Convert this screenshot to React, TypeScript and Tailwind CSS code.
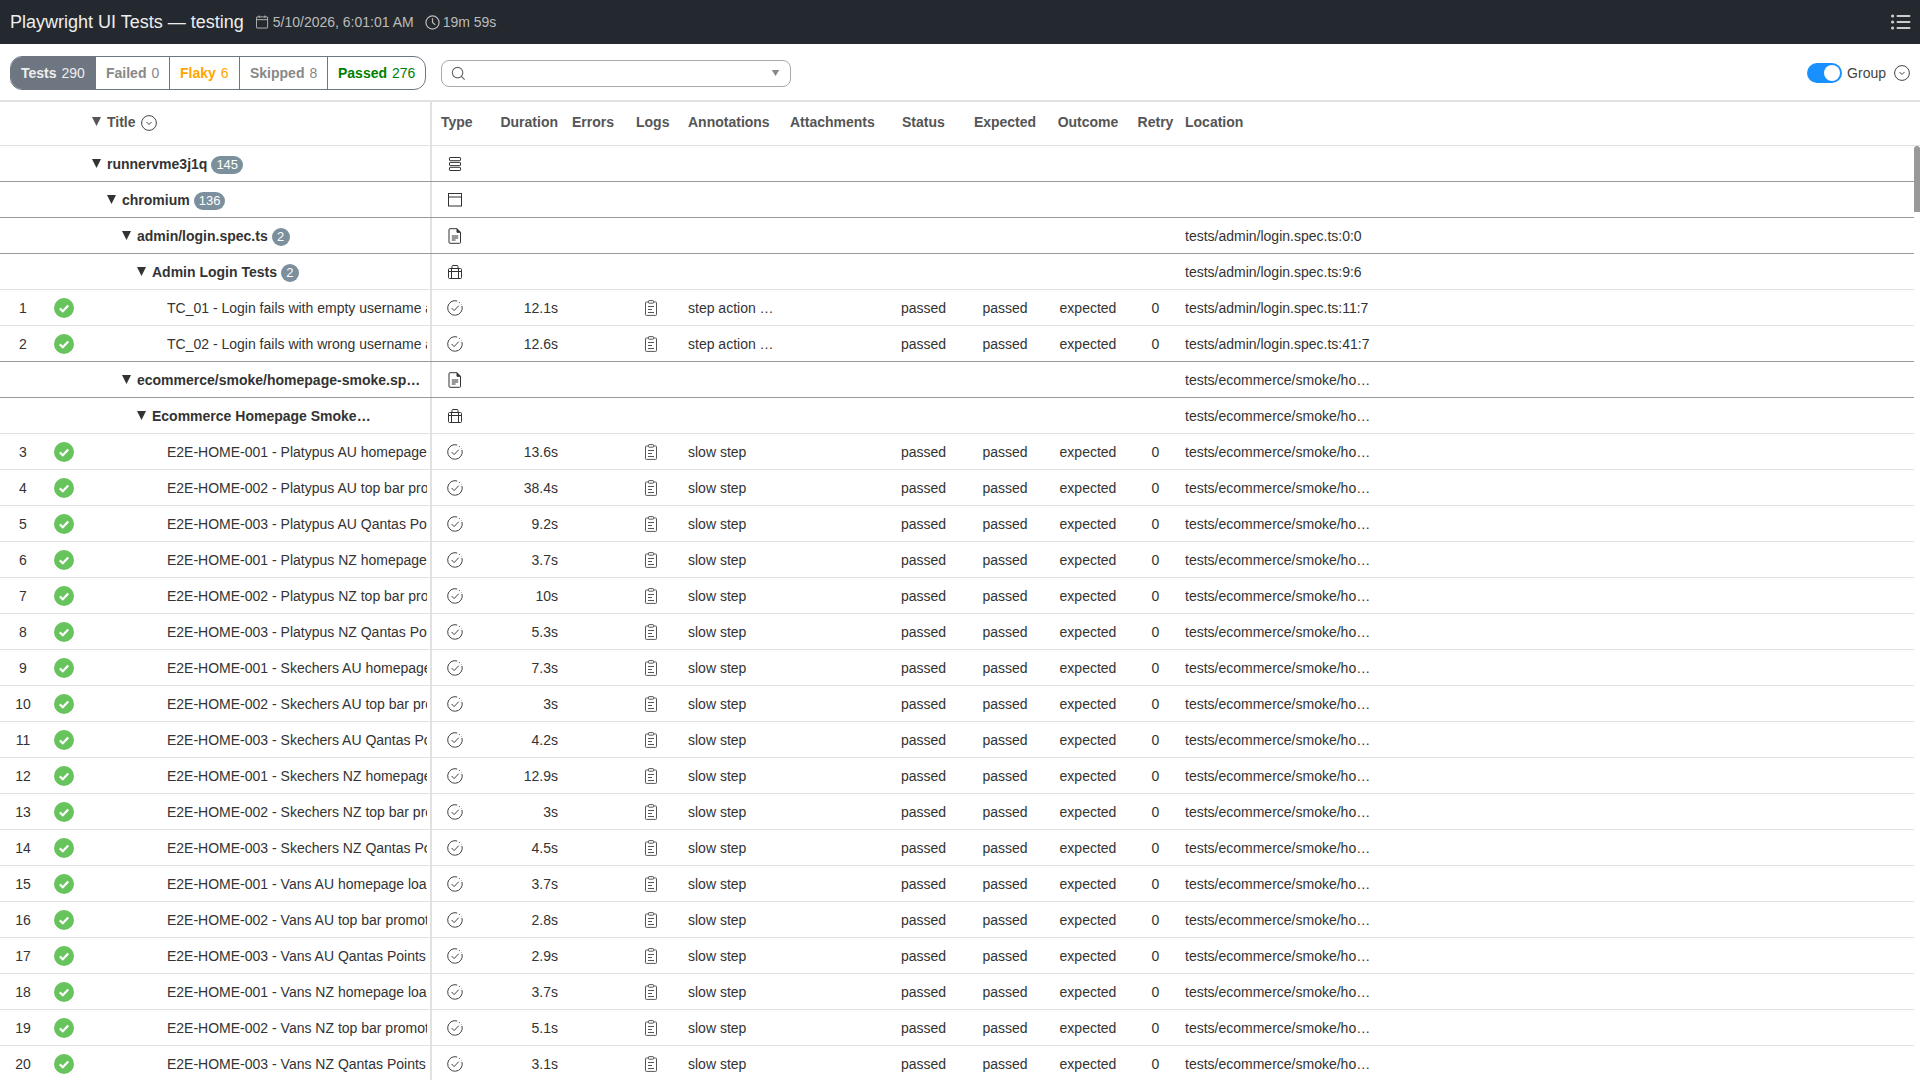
import type { ReactNode } from 'react'

const COLS =
  'grid grid-cols-[58px_76px_62px_52px_102px_112px_74px_74px_92px_43px_1fr] items-center'

// ── Icons ─────────────────────────────────────────────────────────────────
function Svg({ children, className }: { children: ReactNode; className?: string }) {
  return (
    <svg viewBox="0 0 16 16" fill="none" stroke="currentColor" strokeWidth="1" className={className ?? 'h-4 w-4 text-[#333]'}>
      {children}
    </svg>
  )
}

const ServerIcon = () => (
  <Svg>
    <rect x="2.5" y="1.5" width="11" height="3.2" rx="0.6" />
    <rect x="2.5" y="6.4" width="11" height="3.2" rx="0.6" />
    <rect x="2.5" y="11.3" width="11" height="3.2" rx="0.6" />
  </Svg>
)

const BrowserIcon = () => (
  <Svg>
    <rect x="1.5" y="1.5" width="13" height="12.5" />
    <path d="M1.5 5h13" />
  </Svg>
)

const FileIcon = () => (
  <Svg>
    <path d="M3 0.7h7l3.5 3.6v10a1 1 0 0 1-1 1H3a1 1 0 0 1-1-1V1.7a1 1 0 0 1 1-1z" />
    <path d="M10 0.7v3.6h3.5" fill="currentColor" />
    <path d="M4.8 8h6.4M4.8 10h6.4M4.8 12h3.8" />
  </Svg>
)

const SuiteIcon = () => (
  <Svg>
    <rect x="1.5" y="4.5" width="13" height="10" rx="1" />
    <path d="M5 4.5V2.5a1 1 0 0 1 1-1h4a1 1 0 0 1 1 1v2M1.5 7.5h13M4.5 4.5v10M11.5 4.5v10" />
  </Svg>
)

const TestIcon = () => (
  <Svg className="h-4 w-4 text-[#444]">
    <path d="M10.2 1A7.3 7.3 0 1 0 15 6" />
    <path d="M12.2 2.2l.8.8M14.3 4.1l.2.4" />
    <path d="M4.6 8l2.5 2.6 4.6-4.9" />
  </Svg>
)

const LogIcon = () => (
  <Svg className="h-4 w-4 text-[#555]">
    <rect x="2.5" y="2" width="11" height="13.4" rx="0.8" />
    <rect x="5.5" y="0.6" width="5" height="2.6" rx="0.6" fill="#fff" />
    <path d="M5 6.5h6M5 9.5h4M5 12.5h6" />
  </Svg>
)

const CircleChevron = () => (
  <svg viewBox="0 0 16 16" fill="none" stroke="#444" className="h-4 w-4">
    <circle cx="8" cy="8" r="7.4" strokeWidth="1" />
    <path d="M5.5 7l2.5 2.5L10.5 7" strokeWidth="1" />
  </svg>
)

// ── Data ──────────────────────────────────────────────────────────────────
type Row =
  | { kind: 'group'; depth: 0 | 1 | 2 | 3; title: string; badge?: string; icon: ReactNode; location?: string; dark: boolean; max?: string }
  | { kind: 'test'; n: number; title: string; duration: string; annotation: string; location: string; dark: boolean }

const SMOKE = 'tests/ecommerce/smoke/homepage-smoke.spec.ts'

const smokeTests: [string, string][] = [
  ['E2E-HOME-001 - Platypus AU homepage loads', '13.6s'],
  ['E2E-HOME-002 - Platypus AU top bar promotion', '38.4s'],
  ['E2E-HOME-003 - Platypus AU Qantas Points', '9.2s'],
  ['E2E-HOME-001 - Platypus NZ homepage loads', '3.7s'],
  ['E2E-HOME-002 - Platypus NZ top bar promotion', '10s'],
  ['E2E-HOME-003 - Platypus NZ Qantas Points', '5.3s'],
  ['E2E-HOME-001 - Skechers AU homepage loads', '7.3s'],
  ['E2E-HOME-002 - Skechers AU top bar promotion', '3s'],
  ['E2E-HOME-003 - Skechers AU Qantas Points', '4.2s'],
  ['E2E-HOME-001 - Skechers NZ homepage loads', '12.9s'],
  ['E2E-HOME-002 - Skechers NZ top bar promotion', '3s'],
  ['E2E-HOME-003 - Skechers NZ Qantas Points', '4.5s'],
  ['E2E-HOME-001 - Vans AU homepage loads', '3.7s'],
  ['E2E-HOME-002 - Vans AU top bar promotion', '2.8s'],
  ['E2E-HOME-003 - Vans AU Qantas Points', '2.9s'],
  ['E2E-HOME-001 - Vans NZ homepage loads', '3.7s'],
  ['E2E-HOME-002 - Vans NZ top bar promotion', '5.1s'],
  ['E2E-HOME-003 - Vans NZ Qantas Points', '3.1s'],
]

const rows: Row[] = [
  { kind: 'group', depth: 0, title: 'runnervme3j1q', badge: '145', icon: <ServerIcon />, dark: true },
  { kind: 'group', depth: 1, title: 'chromium', badge: '136', icon: <BrowserIcon />, dark: true },
  { kind: 'group', depth: 2, title: 'admin/login.spec.ts', badge: '2', icon: <FileIcon />, location: 'tests/admin/login.spec.ts:0:0', dark: true },
  { kind: 'group', depth: 3, title: 'Admin Login Tests', badge: '2', icon: <SuiteIcon />, location: 'tests/admin/login.spec.ts:9:6', dark: false },
  { kind: 'test', n: 1, title: 'TC_01 - Login fails with empty username and password', duration: '12.1s', annotation: 'step action slow', location: 'tests/admin/login.spec.ts:11:7', dark: false },
  { kind: 'test', n: 2, title: 'TC_02 - Login fails with wrong username and password', duration: '12.6s', annotation: 'step action slow', location: 'tests/admin/login.spec.ts:41:7', dark: true },
  { kind: 'group', depth: 2, title: 'ecommerce/smoke/homepage-smoke.spec.ts', icon: <FileIcon />, location: `${SMOKE}:0:0`, dark: true, max: 'max-w-[284px]' },
  { kind: 'group', depth: 3, title: 'Ecommerce Homepage Smoke Tests', icon: <SuiteIcon />, location: `${SMOKE}:9:6`, dark: false, max: 'max-w-[220px]' },
  ...smokeTests.map(
    ([title, duration], i): Row => ({
      kind: 'test',
      n: i + 3,
      title,
      duration,
      annotation: 'slow step',
      location: `${SMOKE}:${i + 20}:7`,
      dark: false,
    }),
  ),
]

const INDENT = ['ml-[8px]', 'ml-[23px]', 'ml-[38px]', 'ml-[53px]']

// ── Pieces ────────────────────────────────────────────────────────────────
function Pill({ label, count, className }: { label: string; count: number; className: string }) {
  return (
    <div className={`flex h-full items-center gap-[5px] px-[10px] ${className}`}>
      <span className="font-bold">{label}</span>
      <span>{count}</span>
    </div>
  )
}

function Triangle() {
  return (
    <svg viewBox="0 0 9 9" fill="currentColor" className="mr-[6px] h-[9px] w-[9px] shrink-0 -translate-y-px">
      <path d="M0 0h9L4.5 9z" />
    </svg>
  )
}

function HeaderRow() {
  const cell = 'truncate px-2'
  return (
    <div className="flex h-[44px] shrink-0 border-b border-[#e1e1e1] text-[14px] font-bold text-[#555]">
      <div className="flex w-[432px] shrink-0 items-center border-r-2 border-[#e1e1e1] pb-[2px] pl-[92px]">
        <Triangle />
        <span>Title</span>
        <span className="ml-[5px]">
          <CircleChevron />
        </span>
      </div>
      <div className={`${COLS} flex-1 pb-[2px]`}>
        <div className="truncate pl-[9px]">Type</div>
        <div className={`${cell} text-right`}>Duration</div>
        <div className="px-[6px]">Errors</div>
        <div className={cell}>Logs</div>
        <div className={cell}>Annotations</div>
        <div className={cell}>Attachments</div>
        <div className={cell}>Status</div>
        <div className="text-center">Expected</div>
        <div className="text-center">Outcome</div>
        <div className="text-center">Retry</div>
        <div className={cell}>Location</div>
      </div>
    </div>
  )
}

function TableRow({ row }: { row: Row }) {
  const border = row.dark ? 'border-[#999]' : 'border-[#e1e1e1]'
  return (
    <div className={`flex h-9 shrink-0 border-b text-[14px] text-[#333] ${border}`}>
      {/* pt-[2px] sits the text a pixel lower, the icons are pulled back up */}
      <div className="flex w-[432px] shrink-0 items-center border-r-2 border-[#e1e1e1] pt-[2px]">
        {row.kind === 'test' ? (
          <>
            <div className="w-[46px] shrink-0 text-center">{row.n}</div>
            <div className="flex w-[36px] shrink-0 -translate-y-px justify-center">
              <svg viewBox="0 0 20 20" className="h-5 w-5">
                <circle cx="10" cy="10" r="10" fill="#67c45c" />
                <path d="M5.8 10.4l3 2.8 5.4-5.8" fill="none" stroke="#fff" strokeWidth="2.2" />
              </svg>
            </div>
            <div className="ml-[85px] w-[260px] overflow-hidden whitespace-nowrap">{row.title}</div>
          </>
        ) : (
          <>
            <div className="w-[84px] shrink-0" />
            <div className={`flex items-center font-bold ${INDENT[row.depth]}`}>
              <Triangle />
              <span className={`truncate ${row.max ?? ''}`}>{row.title}</span>
              {row.badge && (
                <span className="ml-[4px] flex h-[18px] min-w-[18px] items-center justify-center rounded-full bg-[#7b8f9d] px-[5px] text-[13px] font-normal text-white">
                  {row.badge}
                </span>
              )}
            </div>
          </>
        )}
      </div>
      <div className={`${COLS} flex-1 pt-[2px]`}>
        <div className="-translate-y-px pl-[15px]">{row.kind === 'test' ? <TestIcon /> : row.icon}</div>
        {row.kind === 'test' ? (
          <>
            <div className="px-2 text-right">{row.duration}</div>
            <div />
            <div className="-translate-y-px pl-[15px]">
              <LogIcon />
            </div>
            <div className="truncate px-2">
              <span className="block w-[86px] truncate">{row.annotation}</span>
            </div>
            <div />
            <div className="pl-[7px]">passed</div>
            <div className="text-center">passed</div>
            <div className="text-center">expected</div>
            <div className="text-center">0</div>
          </>
        ) : (
          <div className="col-span-9" />
        )}
        <div className="px-2">
          <span className="block w-[186px] truncate">{row.location}</span>
        </div>
      </div>
    </div>
  )
}

export default function App() {
  return (
    <div className="flex h-screen flex-col overflow-hidden bg-white font-['Liberation_Sans',sans-serif]">
      {/* Top bar */}
      <div className="flex h-[44px] shrink-0 items-center bg-[#24292f] pl-[10px] pr-[9px]">
        <span className="text-[18px] text-[#eee]">Playwright UI Tests — testing</span>
        <div className="ml-[12px] flex items-center gap-[4px] text-[14px] text-[#bbb]">
          <svg viewBox="0 0 14 16" fill="none" stroke="currentColor" className="h-4 w-[13px]">
            <rect x="0.5" y="2.5" width="12" height="12" rx="0.5" />
            <path d="M0.5 5.5h12M3.5 1v2.5M9.5 1v2.5" />
          </svg>
          <span>5/10/2026, 6:01:01 AM</span>
        </div>
        <div className="ml-[11px] flex items-center gap-[3px] text-[14px] text-[#bbb]">
          <svg viewBox="0 0 16 16" fill="none" stroke="currentColor" strokeWidth="1.3" className="h-[15px] w-[15px]">
            <circle cx="8" cy="8" r="7" />
            <path d="M8 3.5V8l3 2.5" />
          </svg>
          <span>19m 59s</span>
        </div>
        <svg viewBox="0 0 20 16" fill="#ccc" className="ml-auto h-4 w-5">
          <circle cx="1.6" cy="2" r="1.6" />
          <circle cx="1.6" cy="8" r="1.6" />
          <circle cx="1.6" cy="14" r="1.6" />
          <rect x="5.5" y="1" width="14" height="2" rx="1" />
          <rect x="5.5" y="7" width="14" height="2" rx="1" />
          <rect x="5.5" y="13" width="14" height="2" rx="1" />
        </svg>
      </div>

      {/* Filter bar */}
      <div className="flex h-[58px] shrink-0 items-center border-b-2 border-[#e1e1e1] pl-[10px] pr-[10px] pt-[2px]">
        <div className="flex h-[34px] items-center divide-x divide-[#6e7781] overflow-hidden rounded-[12px] border border-[#6e7781] text-[14px]">
          <Pill label="Tests" count={290} className="w-[85px] bg-[#6e7781] text-[#eee]" />
          <Pill label="Failed" count={0} className="w-[74px] text-[#888]" />
          <Pill label="Flaky" count={6} className="w-[70px] text-[#ffa500]" />
          <Pill label="Skipped" count={8} className="w-[88px] text-[#888]" />
          <Pill label="Passed" count={276} className="w-[97px] text-[#008000]" />
        </div>
        <div className="ml-[15px] flex h-[27px] w-[350px] items-center justify-between rounded-[8px] border border-[#aaa] pl-[9px] pr-[10px]">
          <svg viewBox="0 0 16 16" fill="none" stroke="#666" strokeWidth="1.2" className="h-[15px] w-[15px]">
            <circle cx="7" cy="7" r="5.6" />
            <path d="M11 11l3.6 3.6" />
          </svg>
          <svg viewBox="0 0 10 8" fill="#888" className="h-[6px] w-[9px]">
            <path d="M0 0h10L5 8z" />
          </svg>
        </div>
        <div className="ml-auto flex items-center">
          <div className="flex h-5 w-[35px] items-center justify-end rounded-full bg-[#1890ff] pr-[2px]">
            <div className="h-4 w-4 rounded-full bg-white" />
          </div>
          <span className="ml-[5px] text-[14px] text-[#444]">Group</span>
          <span className="ml-[8px]">
            <CircleChevron />
          </span>
        </div>
      </div>

      <HeaderRow />

      {/* Rows */}
      <div className="relative flex min-h-0 flex-1 flex-col overflow-hidden pr-[6px]">
        {rows.map((row, i) => (
          <TableRow key={i} row={row} />
        ))}
        <div className="absolute right-0 top-0 h-[66px] w-[6px] rounded-t-[3px] bg-[#999]" />
      </div>
    </div>
  )
}
